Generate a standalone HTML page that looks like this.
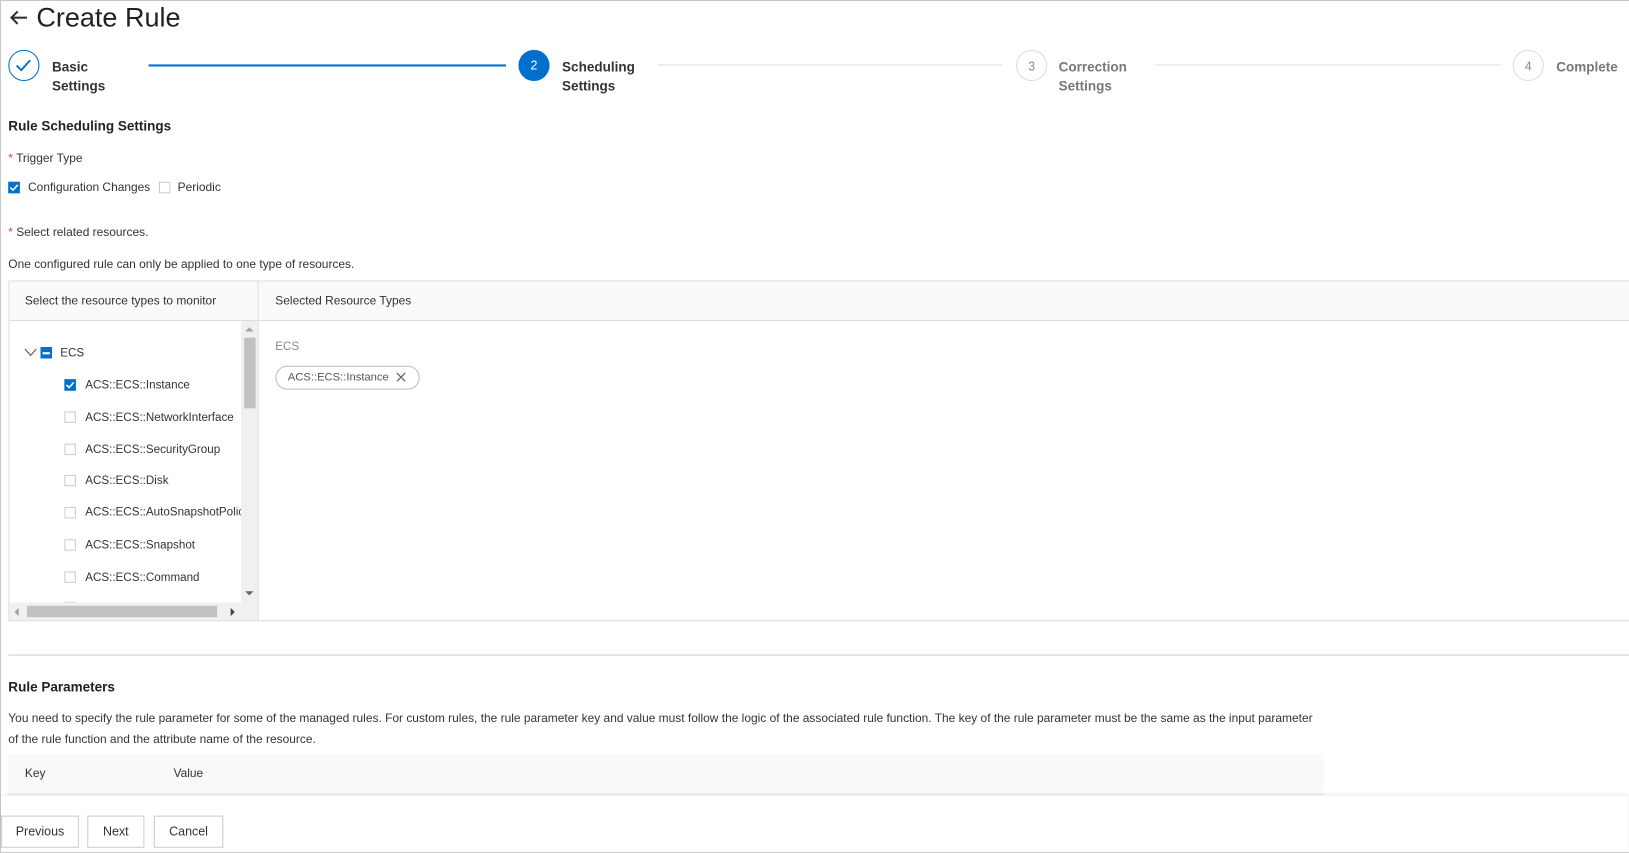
<!DOCTYPE html>
<html><head><meta charset="utf-8"><style>
html,body{margin:0;padding:0;background:#fff;overflow:hidden}
body{width:1629px;height:852px}
#w{position:absolute;left:0;top:0;width:1568px;height:820px;transform:scale(1.0389,1.0390);transform-origin:0 0;font-family:"Liberation Sans",sans-serif;color:#333;font-size:11.5px}
.a{position:absolute;white-space:nowrap}
.t{transform:translateY(-50%)}
.c{position:absolute;width:30px;height:30px;border-radius:50%;box-sizing:border-box;text-align:center;line-height:30px;font-size:12px}
.cb{position:absolute;width:11px;height:11px;border:1px solid #ccc;box-sizing:border-box;background:#fff}
.cbk{background:#0070cc;border-color:#0070cc}
.st{font-size:13px;font-weight:bold;line-height:18px}
.ti{font-size:11.2px}
.btn{position:absolute;top:785px;height:31px;border:1px solid #ccc;box-sizing:border-box;line-height:29px;text-align:center;font-size:12px;background:#fff}
</style></head><body><div id="w">
<div class="a" style="left:0;top:0;width:1567px;height:819px;border:1px solid #c8c8c8"></div>
<svg class="a" style="left:8px;top:8px" width="20" height="18" viewBox="0 0 20 18"><path d="M18 9H3M9 3L3 9l6 6" stroke="#333" stroke-width="2" fill="none"/></svg>
<div class="a t" style="left:35px;top:17px;font-size:26px;color:#222">Create Rule</div>

<div class="c" style="left:8px;top:48px;border:1.5px solid #0070cc"><svg width="27" height="27" viewBox="0 0 27 27" style="position:absolute;left:0;top:0"><path d="M7 14l4.5 4.5 8.5-9.5" stroke="#0070cc" stroke-width="1.8" fill="none"/></svg></div>
<div class="a st" style="left:50px;top:56px;color:#333">Basic<br>Settings</div>
<div class="a" style="left:143px;top:62px;width:344px;height:1.5px;background:#0070cc"></div>
<div class="c" style="left:499px;top:48px;background:#0070cc;color:#fff">2</div>
<div class="a st" style="left:541px;top:56px;color:#333">Scheduling<br>Settings</div>
<div class="a" style="left:633px;top:62px;width:332px;height:1px;background:#ddd"></div>
<div class="c" style="left:978px;top:48px;border:1px solid #ddd;color:#888">3</div>
<div class="a st" style="left:1019px;top:56px;color:#777">Correction<br>Settings</div>
<div class="a" style="left:1112px;top:62px;width:332px;height:1px;background:#ddd"></div>
<div class="c" style="left:1456px;top:48px;border:1px solid #ddd;color:#888">4</div>
<div class="a st" style="left:1498px;top:56px;color:#777">Complete</div>

<div class="a t" style="left:8px;top:121px;font-size:13px;color:#222;font-weight:bold">Rule Scheduling Settings</div>
<div class="a t" style="left:8px;top:153px"><span style="color:#e0413a">*</span> Trigger Type</div>
<div class="cb cbk" style="left:8px;top:175px"></div>
<svg class="a" style="left:8px;top:175px" width="11" height="11"><path d="M2 5.5l2.5 2.5 4.5-5" stroke="#fff" stroke-width="1.5" fill="none"/></svg>
<div class="a t" style="left:27px;top:181px">Configuration Changes</div>
<div class="cb" style="left:153px;top:175px"></div>
<div class="a t" style="left:171px;top:181px">Periodic</div>
<div class="a t" style="left:8px;top:224px"><span style="color:#e0413a">*</span> Select related resources.</div>
<div class="a t" style="left:8px;top:255px">One configured rule can only be applied to one type of resources.</div>

<div class="a" style="left:8px;top:270px;width:1561px;height:328px;border:1px solid #ddd;box-sizing:border-box"></div>
<div class="a" style="left:9px;top:271px;width:1559px;height:37px;background:#fafafa;border-bottom:1px solid #ddd"></div>
<div class="a" style="left:248px;top:271px;width:1px;height:326px;background:#ddd"></div>
<div class="a t" style="left:24px;top:290px">Select the resource types to monitor</div>
<div class="a t" style="left:265px;top:290px">Selected Resource Types</div>
<div class="a" style="left:9px;top:309px;width:239px;height:288px;overflow:hidden">
<div class="a" style="left:223px;top:0;width:16px;height:271px;background:#f0f0f0"></div>
<div class="a" style="left:226px;top:16px;width:11px;height:68px;background:#c1c1c1"></div>
<div class="a" style="left:227px;top:6px;border:4px solid transparent;border-bottom-color:#a0a0a0;border-top:0;width:0;height:0"></div>
<div class="a" style="left:227px;top:260px;border:4px solid transparent;border-top-color:#666;border-bottom:0;width:0;height:0"></div>
<div class="a" style="left:0;top:271px;width:239px;height:17px;background:#f0f0f0"></div>
<div class="a" style="left:17px;top:274px;width:183px;height:11px;background:#c1c1c1"></div>
<div class="a" style="left:5px;top:276px;border:4px solid transparent;border-right-color:#a0a0a0;border-left:0;width:0;height:0"></div>
<div class="a" style="left:213px;top:276px;border:4px solid transparent;border-left-color:#444;border-right:0;width:0;height:0"></div>
</div>
<svg class="a" style="left:23px;top:335px" width="13" height="9"><path d="M1 1l5.5 6L12 1" stroke="#666" stroke-width="1.2" fill="none"/></svg>
<div class="cb cbk" style="left:39px;top:334px"></div>
<div class="a" style="left:41px;top:339px;width:7px;height:1.5px;background:#fff"></div>
<div class="a t ti" style="left:58px;top:340px">ECS</div>
<div class="cb cbk" style="left:62px;top:365px"></div>
<svg class="a" style="left:62px;top:365px" width="11" height="11"><path d="M2 5.5l2.5 2.5 4.5-5" stroke="#fff" stroke-width="1.5" fill="none"/></svg>
<div class="a t ti" style="left:82px;top:371px">ACS::ECS::Instance</div>
<div class="cb" style="left:62px;top:396px"></div><div class="a t ti" style="left:82px;top:402px">ACS::ECS::NetworkInterface</div>
<div class="cb" style="left:62px;top:427px"></div><div class="a t ti" style="left:82px;top:433px">ACS::ECS::SecurityGroup</div>
<div class="cb" style="left:62px;top:457px"></div><div class="a t ti" style="left:82px;top:463px">ACS::ECS::Disk</div>
<div class="a" style="left:62px;top:488px;width:170px;height:14px;overflow:hidden"><div class="cb" style="left:0;top:0"></div><div class="a ti" style="left:20px;top:-1px">ACS::ECS::AutoSnapshotPolicy</div></div>
<div class="cb" style="left:62px;top:519px"></div><div class="a t ti" style="left:82px;top:525px">ACS::ECS::Snapshot</div>
<div class="cb" style="left:62px;top:550px"></div><div class="a t ti" style="left:82px;top:556px">ACS::ECS::Command</div>
<div class="a" style="left:62px;top:579px;width:11px;height:1px;background:#ddd"></div>

<div class="a t ti" style="left:265px;top:334px;color:#888">ECS</div>
<div class="a" style="left:265px;top:352px;width:139px;height:23px;border:1px solid #bbb;border-radius:12px;box-sizing:border-box"></div>
<div class="a t" style="left:277px;top:363px;color:#555;font-size:10.8px">ACS::ECS::Instance</div>
<svg class="a" style="left:381px;top:358px" width="10" height="10"><path d="M1 1l8 8M9 1l-8 8" stroke="#666" stroke-width="1.2"/></svg>

<div class="a" style="left:8px;top:630px;width:1560px;height:1px;background:#ccc"></div>
<div class="a t" style="left:8px;top:661px;font-size:13px;color:#222;font-weight:bold">Rule Parameters</div>
<div class="a t" style="left:8px;top:692px">You need to specify the rule parameter for some of the managed rules. For custom rules, the rule parameter key and value must follow the logic of the associated rule function. The key of the rule parameter must be the same as the input parameter</div>
<div class="a t" style="left:8px;top:712px">of the rule function and the attribute name of the resource.</div>
<div class="a" style="left:8px;top:725px;width:1266px;height:39px;background:#f9f9f9;border-bottom:1px solid #e5e5e5"></div>
<div class="a t" style="left:24px;top:745px">Key</div>
<div class="a t" style="left:167px;top:745px">Value</div>

<div class="a" style="left:1px;top:766px;width:1566px;height:53px;background:#fff;box-shadow:0 -2px 4px rgba(0,0,0,0.08)"></div>
<div class="btn" style="left:1px;width:75px">Previous</div>
<div class="btn" style="left:84px;width:55px">Next</div>
<div class="btn" style="left:148px;width:67px">Cancel</div>
</div></body></html>
